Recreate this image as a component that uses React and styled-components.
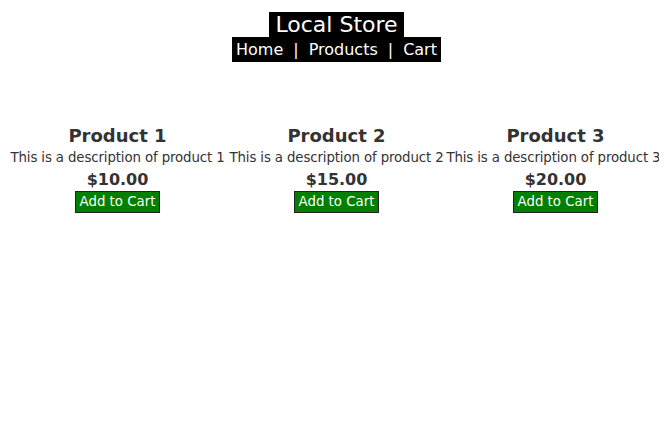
import React from 'react';
import styled, { createGlobalStyle } from 'styled-components';

const GlobalStyle = createGlobalStyle`
  body {
    margin: 8px;
    font-family: "DejaVu Sans", sans-serif;
    background: #fff;
  }
`;

const Page = styled.div`
  width: 657px;
  text-align: center;
`;

const Header = styled.header`
  display: flex;
  flex-direction: column;
  align-items: center;
`;

const Title = styled.h1`
  margin: 4px 0 0;
  padding: 0 6px;
  background: #000;
  color: #fff;
  font-size: 22px;
  font-weight: normal;
  line-height: 25px;
`;

const Nav = styled.nav`
  background: #000;
  color: #fff;
  font-size: 16px;
  line-height: 25px;
  padding: 0 4px;
`;

const NavLink = styled.a`
  color: #fff;
  text-decoration: none;
`;

const Sep = styled.span`
  margin: 0 10px;
`;

const Grid = styled.section`
  display: grid;
  grid-template-columns: repeat(3, 219px);
  margin-top: 63px;
`;

const Card = styled.div`
  display: flex;
  flex-direction: column;
  align-items: center;
  color: #333;
  white-space: nowrap;
`;

const Name = styled.h2`
  margin: 0;
  font-size: 18px;
  line-height: 22px;
`;

const Desc = styled.p`
  margin: 0;
  font-size: 13.333px;
  letter-spacing: -0.12px;
  line-height: 22px;
`;

const Price = styled.p`
  margin: 0;
  font-size: 16px;
  font-weight: bold;
  line-height: 22px;
`;

const Button = styled.button`
  font-family: "DejaVu Sans", sans-serif;
  font-size: 13.333px;
  line-height: 18px;
  padding: 1px 4px;
  background: #008000;
  color: #fff;
  border: 1px solid #222;
  border-radius: 0;
`;

const products = [
  { id: 1, name: 'Product 1', desc: 'This is a description of product 1', price: '$10.00' },
  { id: 2, name: 'Product 2', desc: 'This is a description of product 2', price: '$15.00' },
  { id: 3, name: 'Product 3', desc: 'This is a description of product 3.', price: '$20.00' },
];

export default function App() {
  return (
    <Page>
      <GlobalStyle />
      <Header>
        <Title>Local Store</Title>
        <Nav>
          <NavLink href="#">Home</NavLink>
          <Sep>|</Sep>
          <NavLink href="#">Products</NavLink>
          <Sep>|</Sep>
          <NavLink href="#">Cart</NavLink>
        </Nav>
      </Header>
      <Grid>
        {products.map((p) => (
          <Card key={p.id}>
            <Name>{p.name}</Name>
            <Desc>{p.desc}</Desc>
            <Price>{p.price}</Price>
            <Button>Add to Cart</Button>
          </Card>
        ))}
      </Grid>
    </Page>
  );
}
